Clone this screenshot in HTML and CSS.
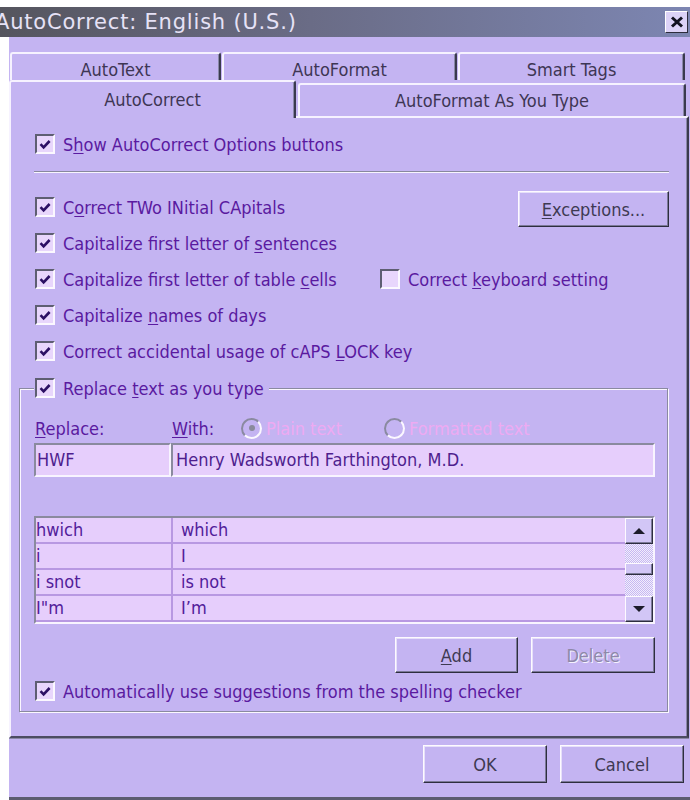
FILE: index.html
```html
<!DOCTYPE html>
<html lang="en">
<head>
<meta charset="utf-8">
<title>AutoCorrect: English (U.S.)</title>
<link rel="stylesheet" href="styles.css">
</head>
<body>
<div class="window">
  <div class="titlebar">
    <span class="title">AutoCorrect: English (U.S.)</span>
    <button class="close" aria-label="Close">
      <svg viewBox="0 0 14 12" width="14" height="12"><path d="M2 1.5 12 10.5M12 1.5 2 10.5"/></svg>
    </button>
  </div>

  <div class="client">
    <div class="tabs-back">
      <div class="tab t-autotext">AutoText</div>
      <div class="tab t-autoformat">AutoFormat</div>
      <div class="tab t-smarttags">Smart Tags</div>
    </div>
    <div class="tabs-front">
      <div class="tab tab-active">AutoCorrect</div>
      <div class="tab t-asyoutype">AutoFormat As You Type</div>
    </div>

    <div class="panel">
      <div class="opts">
        <label class="check"><span class="box"><svg viewBox="0 0 16 16"><path d="M3.5 8.2 6.6 11.3 12.6 5"/></svg></span><span>S<u>h</u>ow AutoCorrect Options buttons</span></label>
      </div>

      <div class="sep"></div>

      <div class="opts opts-main">
        <div class="opt-row">
          <label class="check"><span class="box"><svg viewBox="0 0 16 16"><path d="M3.5 8.2 6.6 11.3 12.6 5"/></svg></span><span>C<u>o</u>rrect TWo INitial CApitals</span></label>
          <button class="btn btn-exceptions"><u>E</u>xceptions...</button>
        </div>
        <div class="opt-row">
          <label class="check"><span class="box"><svg viewBox="0 0 16 16"><path d="M3.5 8.2 6.6 11.3 12.6 5"/></svg></span><span>Capitalize first letter of <u>s</u>entences</span></label>
        </div>
        <div class="opt-row">
          <label class="check check-cells"><span class="box"><svg viewBox="0 0 16 16"><path d="M3.5 8.2 6.6 11.3 12.6 5"/></svg></span><span>Capitalize first letter of table <u>c</u>ells</span></label>
          <label class="check"><span class="box"></span><span>Correct <u>k</u>eyboard setting</span></label>
        </div>
        <div class="opt-row">
          <label class="check"><span class="box"><svg viewBox="0 0 16 16"><path d="M3.5 8.2 6.6 11.3 12.6 5"/></svg></span><span>Capitalize <u>n</u>ames of days</span></label>
        </div>
        <div class="opt-row">
          <label class="check"><span class="box"><svg viewBox="0 0 16 16"><path d="M3.5 8.2 6.6 11.3 12.6 5"/></svg></span><span>Correct accidental usage of cAPS <u>L</u>OCK key</span></label>
        </div>
      </div>

      <fieldset class="group">
        <legend><label class="check check-legend"><span class="box"><svg viewBox="0 0 16 16"><path d="M3.5 8.2 6.6 11.3 12.6 5"/></svg></span><span>Replace <u>t</u>ext as you type</span></label></legend>

        <div class="field-labels">
          <span class="lbl-replace"><u>R</u>eplace:</span>
          <span class="lbl-with"><u>W</u>ith:</span>
          <span class="radio radio-plain"><span class="ring"><span class="dot"></span></span>Plain text</span>
          <span class="radio"><span class="ring"></span>Formatted text</span>
        </div>

        <div class="fields">
          <div class="field f-replace">HWF</div>
          <div class="field f-with">Henry Wadsworth Farthington, M.D.</div>
        </div>

        <div class="list">
          <div class="rows">
            <div class="row"><span class="c1">hwich</span><span class="c2">which</span></div>
            <div class="row"><span class="c1">i</span><span class="c2">I</span></div>
            <div class="row"><span class="c1">i snot</span><span class="c2">is not</span></div>
            <div class="row"><span class="c1">I"m</span><span class="c2">I’m</span></div>
          </div>
          <div class="scrollbar">
            <div class="sb-btn"><span class="arrow-up"></span></div>
            <div class="sb-track sb-track-top"></div>
            <div class="sb-thumb"></div>
            <div class="sb-track sb-track-bottom"></div>
            <div class="sb-btn"><span class="arrow-down"></span></div>
          </div>
        </div>

        <div class="list-buttons">
          <button class="btn btn-add"><u>A</u>dd</button>
          <button class="btn btn-delete" disabled>Delete</button>
        </div>

        <label class="check check-spell"><span class="box"><svg viewBox="0 0 16 16"><path d="M3.5 8.2 6.6 11.3 12.6 5"/></svg></span><span>Automatically use su<u>g</u>gestions from the spelling checker</span></label>
      </fieldset>
    </div>

    <div class="footer">
      <button class="btn btn-ok">OK</button>
      <button class="btn btn-cancel">Cancel</button>
    </div>
  </div>
</div>
</body>
</html>
```

FILE: styles.css
```css
* {
  box-sizing: border-box;
}

html,
body {
  margin: 0;
  padding: 0;
}

body {
  width: 690px;
  height: 800px;
  overflow: hidden;
  background: #ffffff;
  font-family: "DejaVu Sans Condensed", "DejaVu Sans", sans-serif;
  font-stretch: condensed;
  font-size: 18px;
  color: #5a1aa0;
}

u {
  text-decoration: underline;
  text-underline-offset: 2px;
}

/* ---------- title bar ---------- */
.window {
  padding-top: 7px;
}

.titlebar {
  height: 30px;
  display: flex;
  align-items: center;
  justify-content: space-between;
  padding-right: 2px;
  overflow: hidden;
  background: linear-gradient(to right, #55555e 0%, #6a6c86 45%, #7d86b2 100%);
}

.title {
  margin-left: -5px;
  white-space: nowrap;
  font-family: "DejaVu Sans", sans-serif;
  font-stretch: normal;
  font-size: 21px;
  letter-spacing: 0.8px;
  color: #e6e2f6;
}

.close {
  width: 23px;
  height: 22px;
  padding: 0;
  display: flex;
  align-items: center;
  justify-content: center;
  background: #dcd2f7;
  border: 1px solid;
  border-color: #ffffff #2c2c3c #2c2c3c #ffffff;
}

.close svg path {
  stroke: #121220;
  stroke-width: 3;
  fill: none;
}

/* ---------- dialog body ---------- */
.client {
  margin-left: 9px;
  padding-top: 15px;
  background: #c4b4f2;
  border-bottom: 3px solid #5c5c70;
}

/* ---------- tabs ---------- */
.tab {
  color: #3e3654;
  text-align: center;
  white-space: nowrap;
  background: #c4b4f2;
  border-top: 2px solid #f6f2ff;
  border-left: 2px solid #f6f2ff;
  border-right: 2px solid #3a3a4e;
  border-radius: 3px 3px 0 0;
  box-shadow: inset -1px 0 0 #8a88a8;
  line-height: 22px;
}

.tabs-back {
  display: flex;
  gap: 1px;
  height: 28px;
  padding-left: 1px;
  overflow: hidden;
}

.tabs-back .tab {
  height: 31px;
  padding-top: 5px;
}

.t-autotext { width: 211px; }
.t-autoformat { width: 235px; }
.t-smarttags { width: 227px; }

.tabs-front {
  display: flex;
  align-items: flex-start;
  height: 36px;
}

.tab-active {
  position: relative;
  z-index: 1;
  width: 287px;
  height: 38px;
  padding-top: 7px;
}

.t-asyoutype {
  width: 388px;
  height: 33px;
  margin-top: 3px;
  margin-left: 2px;
  padding-top: 5px;
}

/* ---------- tab page ---------- */
.panel {
  width: 680px;
  height: 622px;
  padding: 8px 18px 0 8px;
  border-top: 2px solid #f6f2ff;
  border-left: 2px solid #f6f2ff;
  border-right: 2px solid #3a3a4e;
  border-bottom: 2px solid #4c4c62;
  box-shadow: inset -1px 0 0 #8a88a8, 0 1px 0 #8a88a6;
}

.opts {
  margin-left: 16px;
}

.opt-row {
  display: flex;
  align-items: center;
  justify-content: space-between;
  height: 36px;
}

.opt-row:nth-child(3) {
  justify-content: flex-start;
}

.check {
  display: flex;
  align-items: center;
  gap: 8px;
  height: 36px;
  white-space: nowrap;
}

.check-cells {
  width: 345px;
}

.box {
  flex: none;
  width: 20px;
  height: 20px;
  border: 2px solid;
  border-color: #5e5e72 #fbf8ff #fbf8ff #5e5e72;
  background: #e8d6fc;
}

.box svg {
  display: block;
  width: 16px;
  height: 16px;
  fill: none;
  stroke: #2c1064;
  stroke-width: 2.6;
}

.sep {
  height: 2px;
  margin: 9px 0 16px 15px;
  border-top: 1px solid #88889e;
  border-bottom: 1px solid #f8f5ff;
}

/* ---------- buttons ---------- */
.btn {
  font: inherit;
  color: #3e3a52;
  background: #c4b4f2;
  padding: 0;
  border: 1px solid;
  border-color: #fdfaff #2e2e40 #2e2e40 #fdfaff;
  box-shadow: inset -1px -1px 0 #7c7a98, inset 1px 1px 0 #e6e0fa;
}

.btn-exceptions {
  width: 151px;
  height: 36px;
  margin-top: 4px;
}

.btn-delete {
  color: #8e88a8;
  text-shadow: 1px 1px 0 #f6f2ff;
}

/* ---------- replace group ---------- */
.group {
  margin: 7px 1px 0 0;
  padding: 16px 12px 8px 14px;
  border: 1px solid #8a8aa0;
  box-shadow: inset 1px 1px 0 #fbf8ff, 1px 1px 0 #fbf8ff;
  min-width: 0;
}

.group legend {
  padding: 0 5px 0 1px;
  background: #c4b4f2;
}

.check-legend {
  height: 24px;
}

.field-labels {
  display: flex;
  align-items: center;
  height: 24px;
  white-space: nowrap;
}

.lbl-replace {
  width: 138px;
  padding-left: 1px;
}

.lbl-with {
  width: 69px;
}

.radio {
  display: flex;
  align-items: center;
  gap: 3px;
  color: #eeaaf2;
}

.radio-plain {
  width: 143px;
}

.radio .ring {
  flex: none;
  width: 21px;
  height: 21px;
  display: flex;
  align-items: center;
  justify-content: center;
  margin-right: 1px;
  border-radius: 50%;
  border: 2px solid;
  border-color: #8a8aa0 #fbf8ff #fbf8ff #8a8aa0;
  background: #c4b4f2;
}

.radio .dot {
  width: 6px;
  height: 6px;
  border-radius: 50%;
  background: #8a8a9c;
}

.fields {
  display: flex;
  margin-top: 3px;
  height: 34px;
}

.field {
  height: 34px;
  line-height: 30px;
  color: #4e1e8e;
  background: #e6cefc;
  border: 2px solid;
  border-color: #8a8a9e #f8f4ff #f8f4ff #8a8a9e;
  white-space: nowrap;
}

.f-replace {
  width: 137px;
  padding-left: 1px;
}

.f-with {
  width: 484px;
  padding-left: 3px;
}

/* ---------- replacement list ---------- */
.list {
  display: flex;
  width: 621px;
  height: 108px;
  margin-top: 39px;
  background: #e6cefc;
  border: 2px solid;
  border-color: #8a8a9e #f8f4ff #f8f4ff #8a8a9e;
}

.rows {
  flex: 1;
}

.row {
  display: flex;
  height: 26px;
  line-height: 24px;
  border-bottom: 2px solid #b898e2;
  color: #52209a;
}

.c1 {
  width: 137px;
  border-right: 2px solid #b898e2;
}

.c2 {
  padding-left: 8px;
}

.scrollbar {
  flex: none;
  width: 28px;
  display: flex;
  flex-direction: column;
}

.sb-btn,
.sb-thumb {
  background: #d2c6f6;
  border: 1px solid;
  border-color: #fdfaff #2e2e40 #2e2e40 #fdfaff;
  box-shadow: inset -1px -1px 0 #7c7a98;
}

.sb-btn {
  height: 26px;
  display: flex;
  align-items: center;
  justify-content: center;
}

.sb-thumb {
  height: 12px;
}

.sb-track {
  background: repeating-conic-gradient(#f2eefc 0 25%, #c6b8f2 0 50%) 0 0 / 2px 2px;
}

.sb-track-top { height: 19px; }
.sb-track-bottom { height: 21px; }

.arrow-up,
.arrow-down {
  width: 0;
  height: 0;
  border-left: 6px solid transparent;
  border-right: 6px solid transparent;
}

.arrow-up {
  border-bottom: 6px solid #1c1c2a;
}

.arrow-down {
  border-top: 6px solid #1c1c2a;
}

.list-buttons {
  display: flex;
  justify-content: flex-end;
  gap: 13px;
  width: 621px;
  margin-top: 13px;
}

.btn-add {
  width: 123px;
  height: 36px;
}

.btn-delete {
  width: 124px;
  height: 36px;
}

.check-spell {
  height: 24px;
  margin: 6px 0 0 1px;
}

/* ---------- dialog buttons ---------- */
.footer {
  height: 59px;
  display: flex;
  justify-content: flex-end;
  gap: 13px;
  padding: 7px 6px 0 0;
}

.btn-ok,
.btn-cancel {
  width: 124px;
  height: 38px;
}
```
